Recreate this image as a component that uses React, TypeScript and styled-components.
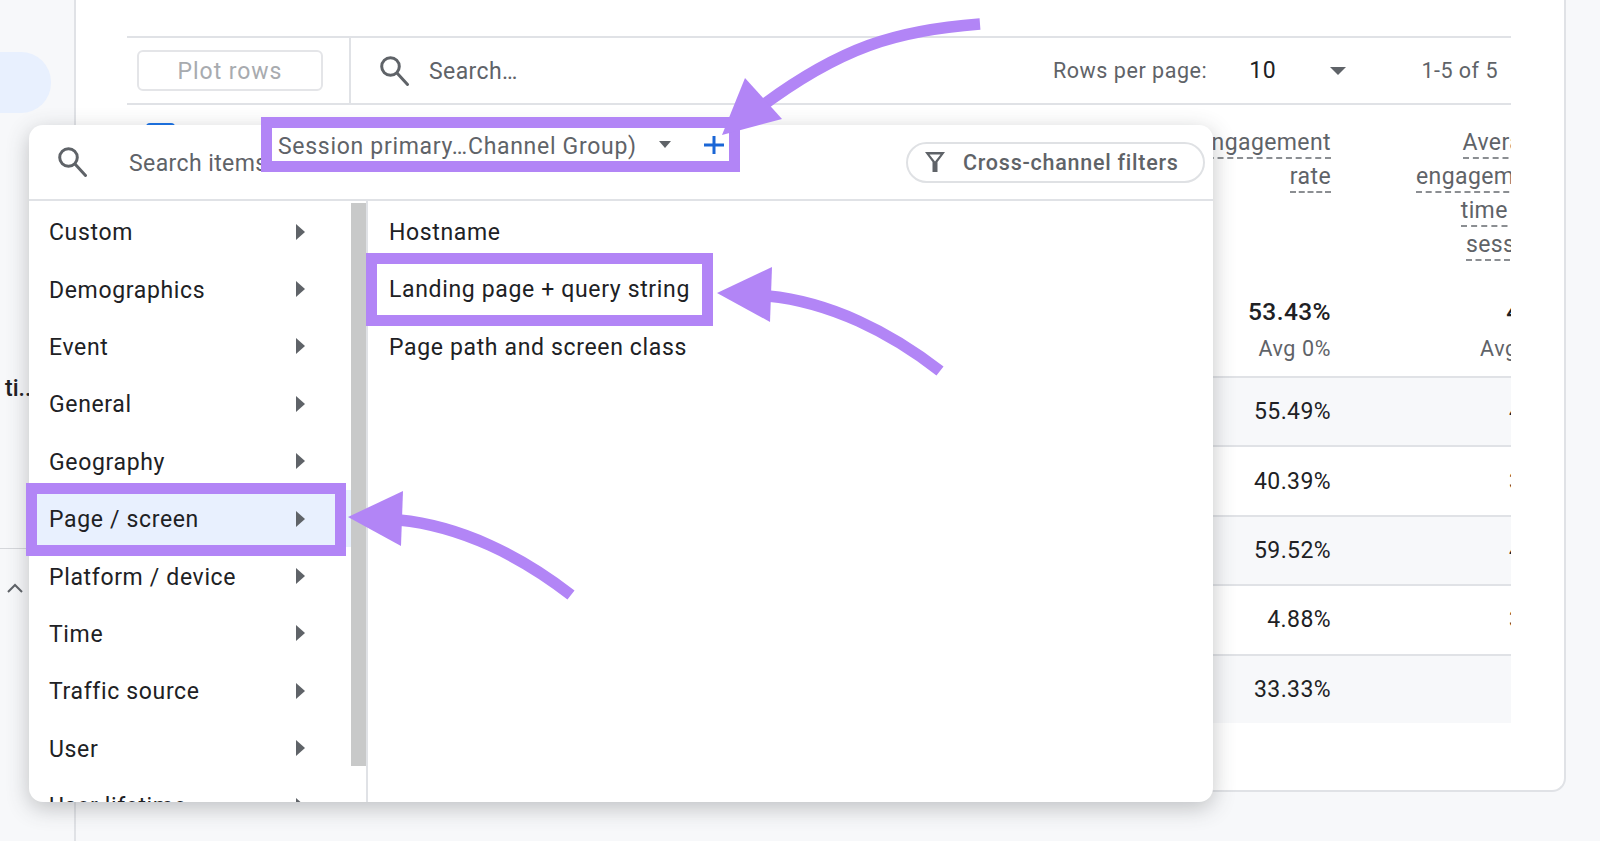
import styled, { createGlobalStyle } from 'styled-components';

const purple = '#b285f6';
const line = '#e0e2e6';
const grey = '#5f6368';
const ink = '#202124';

const categories = [
  'Custom',
  'Demographics',
  'Event',
  'General',
  'Geography',
  'Page / screen',
  'Platform / device',
  'Time',
  'Traffic source',
  'User',
  'User lifetime',
];
const rows = [
  { rate: '55.49%', time: '42s' },
  { rate: '40.39%', time: '36s' },
  { rate: '59.52%', time: '47s' },
  { rate: '4.88%', time: '33s' },
  { rate: '33.33%', time: '9s' },
];

function SearchIcon() {
  return (
    <svg width="30" height="30" viewBox="0 0 30 30" fill="none" stroke={grey} strokeWidth="3">
      <circle cx="10.5" cy="10.5" r="8.8" />
      <path d="M17 17l10.5 11.5" strokeLinecap="round" />
    </svg>
  );
}

function Arrow({ dx = 0, dy = 0 }: { dx?: number; dy?: number }) {
  return (
    <g transform={`translate(${dx} ${dy})`}>
      <path d="M768 296C830 302 890 332 940 371" fill="none" stroke={purple} strokeWidth="11.5" />
      <polygon points="717,293 772,267 770,322" fill={purple} />
    </g>
  );
}

export default function App() {
  return (
    <>
      <GlobalStyle />
      <Page>
        <Sidebar>
          <NavPill />
          <NavLabel>ti...</NavLabel>
          <NavDivider />
          <NavChevron>
            <svg width="16" height="10" viewBox="0 0 16 10" fill="none" stroke={grey} strokeWidth="2">
              <path d="M1 9l7-7 7 7" />
            </svg>
          </NavChevron>
        </Sidebar>
        <Card>
          <Toolbar>
            <PlotCell>
              <PlotButton>Plot rows</PlotButton>
            </PlotCell>
            <ToolbarSearch>
              <SearchIcon />
              <SearchText>Search…</SearchText>
            </ToolbarSearch>
            <RowsLabel>Rows per page:</RowsLabel>
            <RowsValue>10</RowsValue>
            <Caret $w={8} $h={8} />
            <RowsRange>1-5 of 5</RowsRange>
          </Toolbar>
          <Table>
            <HeaderRow>
              <HeaderCheck />
              <HeaderCell>
                <Dashed>Engagement</Dashed>
                <Dashed>rate</Dashed>
              </HeaderCell>
              <HeaderCell>
                <Dashed>Average</Dashed>
                <Dashed>engagement</Dashed>
                <Dashed>time per</Dashed>
                <Dashed>session</Dashed>
              </HeaderCell>
            </HeaderRow>
            <TotalRow>
              <span />
              <TotalCell>
                <strong>53.43%</strong>
                <small>Avg 0%</small>
              </TotalCell>
              <TotalCell>
                <strong>43s</strong>
                <small>Avg 0s</small>
              </TotalCell>
            </TotalRow>
            {rows.map((row, i) => (
              <DataRow key={row.rate} $shaded={i % 2 === 0}>
                <span />
                <DataCell>{row.rate}</DataCell>
                <DataCell>{row.time}</DataCell>
              </DataRow>
            ))}
          </Table>
        </Card>
      </Page>

      <Panel>
        <PanelHeader>
          <SearchIcon />
          <PanelSearchText>Search items</PanelSearchText>
          <FilterButton>
            <svg width="20" height="20" viewBox="0 0 20 20" fill={grey} fillRule="evenodd">
              <path d="M0 0h20l-7.5 10v10h-5V10zM4.5 2.5l5.5 7 5.5-7z" />
            </svg>
            Cross-channel filters
          </FilterButton>
        </PanelHeader>
        <PanelBody>
          <CategoryList>
            {categories.map((name) => (
              <CategoryRow key={name} $active={name === 'Page / screen'}>
                <RowName>{name}</RowName>
                <Chevron />
              </CategoryRow>
            ))}
          </CategoryList>
          <ScrollTrack>
            <ScrollThumb />
          </ScrollTrack>
          <ItemList>
            <ItemRow>Hostname</ItemRow>
            <ItemRow>Landing page + query string</ItemRow>
            <ItemRow>Page path and screen class</ItemRow>
          </ItemList>
        </PanelBody>
      </Panel>

      <SessionFrame>
        <SessionLabel>Session primary…Channel Group)</SessionLabel>
        <Caret $w={6.5} $h={7} />
        <PlusSign>
          <svg width="20" height="18" viewBox="0 0 20 18" stroke="#1a66d6" strokeWidth="3">
            <path d="M10 0v18M0 9h20" />
          </svg>
        </PlusSign>
      </SessionFrame>
      <LandingFrame />
      <PageFrame />

      <Annotations viewBox="0 0 1600 841">
        <path d="M980 24C900 30 840 45 750 115" fill="none" stroke={purple} strokeWidth="11.5" />
        <polygon points="745,78 782,119 722,135" fill={purple} />
        <Arrow />
        <Arrow dx={-369} dy={224} />
      </Annotations>
    </>
  );
}

const GlobalStyle = createGlobalStyle`
  html, body {
    margin: 0;
    height: 100%;
    overflow: hidden;
    background: #f7f8fa;
    font-family: Roboto, "Liberation Sans", sans-serif;
  }
`;

const Page = styled.div`
  display: flex;
  width: 1600px;
  height: 841px;
`;

const Sidebar = styled.aside`
  width: 74px;
  flex-shrink: 0;
  padding-top: 52px;
  border-right: 2px solid ${line};
  box-sizing: content-box;
`;

const NavPill = styled.div`
  width: 51px;
  height: 61px;
  background: #e8f0fe;
  border-radius: 0 30px 30px 0;
`;

const NavLabel = styled.div`
  margin: 259px 0 0 5px;
  font-size: 23px;
  line-height: 34px;
  font-weight: 500;
  color: ${ink};
`;

const NavDivider = styled.div`
  height: 1px;
  margin-top: 142px;
  background: #d5d7db;
`;

const NavChevron = styled.div`
  margin: 29px 0 0 7px;
`;

const Card = styled.main`
  width: 1490px;
  height: 792px;
  box-sizing: border-box;
  padding: 36px 51px 0 51px;
  background: #fff;
  border-right: 2px solid ${line};
  border-bottom: 2px solid ${line};
  border-bottom-right-radius: 14px;
`;

const Toolbar = styled.div`
  display: flex;
  align-items: center;
  width: 1384px;
  height: 69px;
  box-sizing: border-box;
  border-top: 2px solid ${line};
  border-bottom: 2px solid ${line};
`;

const PlotCell = styled.div`
  display: flex;
  align-items: center;
  width: 224px;
  height: 100%;
  padding-left: 10px;
  box-sizing: border-box;
  border-right: 2px solid ${line};
`;

const PlotButton = styled.div`
  width: 186px;
  height: 41px;
  box-sizing: border-box;
  border: 2px solid #e4e5e8;
  border-radius: 6px;
  text-align: center;
  font-size: 23px;
  line-height: 40px;
  letter-spacing: 0.95px;
  color: #a8abaf;
`;

const ToolbarSearch = styled.div`
  display: flex;
  align-items: center;
  flex: 1;
  padding-left: 29px;
  gap: 19px;
`;

const SearchText = styled.span`
  padding-top: 2px;
  font-size: 23px;
  letter-spacing: 0.4px;
  color: ${grey};
`;

const RowsLabel = styled.span`
  font-size: 21.5px;
  letter-spacing: 0.55px;
  color: ${grey};
`;

const RowsValue = styled.span`
  margin: 0 54px 0 42px;
  font-size: 23px;
  letter-spacing: 0.6px;
  color: ${ink};
`;

const Caret = styled.span<{ $w: number; $h: number }>`
  width: 0;
  height: 0;
  flex-shrink: 0;
  border-left: ${(p) => p.$w}px solid transparent;
  border-right: ${(p) => p.$w}px solid transparent;
  border-top: ${(p) => p.$h}px solid ${grey};
`;

const RowsRange = styled.span`
  margin: 0 13px 0 75px;
  font-size: 21.5px;
  letter-spacing: 0.5px;
  color: ${grey};
`;

const Table = styled.div`
  width: 1384px;
  overflow: hidden;
`;

const tableColumns = '982px 222px 217px';

const HeaderRow = styled.div`
  display: grid;
  grid-template-columns: ${tableColumns};
  height: 190px;
  padding-top: 20px;
  box-sizing: border-box;
`;

const HeaderCheck = styled.div`
  width: 29px;
  height: 29px;
  margin: -2px 0 0 19px;
  background: #1a73e8;
  border-radius: 4px;
`;

const HeaderCell = styled.div`
  display: flex;
  flex-direction: column;
  align-items: flex-end;
`;

const Dashed = styled.span`
  height: 34px;
  box-sizing: border-box;
  font-size: 23px;
  line-height: 36px;
  letter-spacing: 0.4px;
  color: ${grey};
  border-bottom: 2px dashed #8b8e92;
`;

const TotalRow = styled.div`
  display: grid;
  grid-template-columns: ${tableColumns};
  height: 81px;
`;

const TotalCell = styled.div`
  display: flex;
  flex-direction: column;
  align-items: flex-end;

  strong {
    font-size: 24.5px;
    line-height: 34px;
    font-weight: 500;
    letter-spacing: 0.4px;
    color: ${ink};
  }

  small {
    margin-top: 3px;
    font-size: 21.5px;
    line-height: 34px;
    letter-spacing: 0.6px;
    color: ${grey};
  }
`;

const DataRow = styled.div<{ $shaded: boolean }>`
  display: grid;
  grid-template-columns: ${tableColumns};
  align-items: center;
  height: 69.4px;
  box-sizing: border-box;
  border-top: 2px solid ${line};
  background: ${(p) => (p.$shaded ? '#f7f8fa' : '#fff')};

  &:last-child {
    height: 69px;
  }
`;

const DataCell = styled.div`
  text-align: right;
  font-size: 23px;
  letter-spacing: 0.4px;
  color: ${ink};
`;

const Panel = styled.section`
  position: absolute;
  left: 29px;
  top: 125px;
  width: 1184px;
  height: 677px;
  display: flex;
  flex-direction: column;
  overflow: hidden;
  background: #fff;
  border-radius: 14px;
  box-shadow: 0 6px 22px rgba(60, 64, 67, 0.3);
`;

const PanelHeader = styled.div`
  display: flex;
  align-items: center;
  flex-shrink: 0;
  height: 76px;
  padding-left: 29px;
  box-sizing: border-box;
  border-bottom: 2px solid ${line};
`;

const PanelSearchText = styled.span`
  margin-left: 41px;
  padding-top: 2px;
  font-size: 23px;
  letter-spacing: 0.4px;
  color: ${grey};
`;

const FilterButton = styled.div`
  display: flex;
  align-items: center;
  gap: 18px;
  width: 299px;
  height: 41px;
  margin-left: auto;
  margin-right: 8px;
  padding-left: 17px;
  box-sizing: border-box;
  border: 2px solid #dfe1e4;
  border-radius: 21px;
  font-size: 21.5px;
  letter-spacing: 0.75px;
  font-weight: 500;
  color: ${grey};
`;

const PanelBody = styled.div`
  display: flex;
  flex: 1;
  min-height: 0;
`;

const CategoryList = styled.div`
  width: 322px;
  flex-shrink: 0;
  padding-top: 2px;
`;

const CategoryRow = styled.div<{ $active: boolean }>`
  display: flex;
  align-items: center;
  justify-content: space-between;
  height: 57.4px;
  padding: 0 46px 0 20px;
  box-sizing: border-box;
  font-size: 23px;
  letter-spacing: 0.65px;
  color: ${ink};
  background: ${(p) => (p.$active ? '#e8f0fe' : 'transparent')};
`;

const RowName = styled.span`
  padding-top: 2px;
`;

const Chevron = styled.span`
  width: 0;
  height: 0;
  border-top: 8.5px solid transparent;
  border-bottom: 8.5px solid transparent;
  border-left: 9px solid ${grey};
`;

const ScrollTrack = styled.div`
  width: 17px;
  flex-shrink: 0;
  padding-top: 2px;
  box-sizing: border-box;
  border-right: 2px solid ${line};
`;

const ScrollThumb = styled.div`
  width: 15px;
  height: 563px;
  background: #c8c9c9;
`;

const ItemList = styled.div`
  padding: 2px 0 0 21px;
`;

const ItemRow = styled.div`
  height: 57.4px;
  line-height: 59.4px;
  font-size: 23px;
  letter-spacing: 0.65px;
  color: ${ink};
`;

const SessionFrame = styled.div`
  position: absolute;
  left: 261px;
  top: 117px;
  width: 479px;
  height: 55px;
  box-sizing: border-box;
  display: flex;
  align-items: center;
  padding-left: 6px;
  border: 11px solid ${purple};
  background: #fff;
  font-size: 23px;
  letter-spacing: 0.7px;
  white-space: nowrap;
  color: ${grey};

  ${Caret} {
    margin-left: 22px;
  }
`;

const SessionLabel = styled.span`
  padding-top: 4px;
`;

const PlusSign = styled.span`
  display: flex;
  margin: 1px 0 0 33px;
`;

const LandingFrame = styled.div`
  position: absolute;
  left: 366px;
  top: 253px;
  width: 347px;
  height: 73px;
  box-sizing: border-box;
  border: 11px solid ${purple};
`;

const PageFrame = styled.div`
  position: absolute;
  left: 26px;
  top: 483px;
  width: 320px;
  height: 73px;
  box-sizing: border-box;
  border: 11px solid ${purple};
`;

const Annotations = styled.svg`
  position: absolute;
  left: 0;
  top: 0;
  width: 1600px;
  height: 841px;
  pointer-events: none;
`;
